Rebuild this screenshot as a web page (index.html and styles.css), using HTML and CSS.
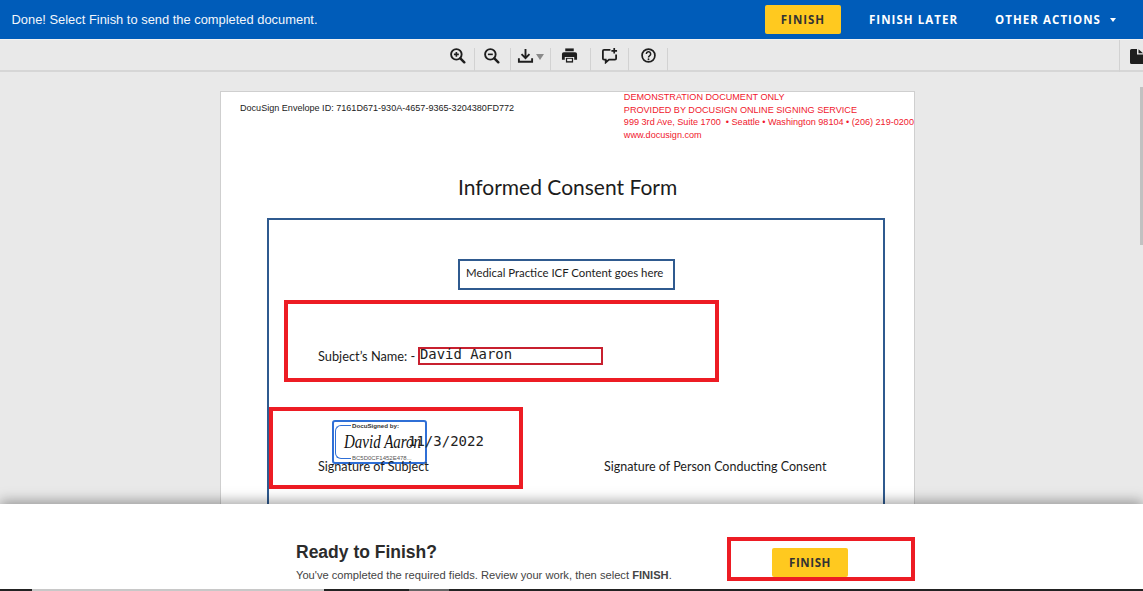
FILE: index.html
```html
<!DOCTYPE html>
<html lang="en">
<head>
<meta charset="utf-8">
<title>Informed Consent Form</title>
<link rel="stylesheet" href="styles.css">
</head>
<body>
<div class="app">
  <header class="topbar">
    <p class="topbar-msg">Done! Select Finish to send the completed document.</p>
    <div class="topbar-actions">
      <button class="btn-finish btn-finish-top">FINISH</button>
      <button class="btn-link btn-later">FINISH LATER</button>
      <button class="btn-link btn-other">OTHER ACTIONS <span class="caret"></span></button>
    </div>
  </header>

  <nav class="toolbar">
    <div class="tool tool-a">
      <svg class="ico" viewBox="0 0 18 18"><circle cx="7.8" cy="7.8" r="5.6" fill="none" stroke="#1e1e1e" stroke-width="2"/><path d="M12 12l4.2 4.2" stroke="#1e1e1e" stroke-width="2.6" stroke-linecap="round"/><path d="M5.2 7.8h5.2M7.8 5.2v5.2" stroke="#1e1e1e" stroke-width="1.7"/></svg>
    </div>
    <div class="tool tool-b">
      <svg class="ico" viewBox="0 0 18 18"><circle cx="7.8" cy="7.8" r="5.6" fill="none" stroke="#1e1e1e" stroke-width="2"/><path d="M12 12l4.2 4.2" stroke="#1e1e1e" stroke-width="2.6" stroke-linecap="round"/><path d="M5.2 7.8h5.2" stroke="#1e1e1e" stroke-width="1.7"/></svg>
    </div>
    <div class="tool tool-c">
      <svg class="ico" viewBox="0 0 18 18"><path d="M9 2v9.5M4.8 7.6L9 11.8l4.2-4.2" fill="none" stroke="#1e1e1e" stroke-width="2"/><path d="M2 12v3.6h14V12" fill="none" stroke="#1e1e1e" stroke-width="2"/></svg>
      <svg class="ico-caret" viewBox="0 0 8 6"><path d="M0 0h8L4 6z" fill="#8a8a8a"/></svg>
    </div>
    <div class="tool tool-c tool-print">
      <svg class="ico" viewBox="0 0 18 18"><path d="M4.5 1.5h9v3h-9z" fill="#1e1e1e"/><path d="M3 5.5h12a2 2 0 0 1 2 2v6h-3v-3H4v3H1v-6a2 2 0 0 1 2-2z" fill="#1e1e1e"/><path d="M5.2 11.5h7.6v5H5.2z" fill="#1e1e1e"/><path d="M6.5 12.5h5v2.500h-5z" fill="#e9e9e9"/></svg>
    </div>
    <div class="tool tool-d">
      <svg class="ico" viewBox="0 0 18 18"><path d="M10 3H3.2A1.2 1.2 0 0 0 2 4.2v8A1.2 1.2 0 0 0 3.2 13.400H5v3l3.500-3h6.300a1.200 1.200 0 0 0 1.200-1.200V8" fill="none" stroke="#1e1e1e" stroke-width="1.900"/><path d="M14 1v6M11 4h6" stroke="#1e1e1e" stroke-width="1.800"/></svg>
    </div>
    <div class="tool tool-e">
      <svg class="ico" viewBox="0 0 18 18"><circle cx="9" cy="9" r="6.800" fill="none" stroke="#1e1e1e" stroke-width="1.800"/><path d="M6.700 7.300a2.300 2.300 0 1 1 3.400 2c-.8.500-1.100.9-1.100 1.700" fill="none" stroke="#1e1e1e" stroke-width="1.600"/><circle cx="9" cy="13" r="1" fill="#1e1e1e"/></svg>
    </div>
    <div class="toolbar-end">
      <svg class="ico-doc" viewBox="0 0 13 15"><path d="M1.500 0H7v5.500h6V15H1.500A1.500 1.500 0 0 1 0 13.500v-12A1.500 1.500 0 0 1 1.500 0z" fill="#1e1e1e"/><path d="M8.500 0.200L13 4.200H8.500z" fill="#1e1e1e"/></svg>
    </div>
  </nav>

  <main class="viewer">
    <article class="page">
      <div class="page-head">
        <p class="envelope">DocuSign Envelope ID: 7161D671-930A-4657-9365-3204380FD772</p>
        <div class="demo">
          <p>DEMONSTRATION DOCUMENT ONLY</p>
          <p>PROVIDED BY DOCUSIGN ONLINE SIGNING SERVICE</p>
          <p>999 3rd Ave, Suite 1700 &nbsp;• Seattle • Washington 98104 • (206) 219-0200</p>
          <p>www.docusign.com</p>
        </div>
      </div>
      <h1 class="doc-title">Informed Consent Form</h1>
      <div class="doc-frame"></div>
      <div class="content-box">Medical Practice ICF Content goes here</div>
      <div class="mark mark-name"></div>
      <span class="doc-label label-name">Subject’s Name: -</span>
      <div class="name-field">David Aaron</div>
      <div class="mark mark-sign"></div>
      <div class="signed">
        <span class="bracket"></span>
        <span class="signed-by">DocuSigned by:</span>
        <span class="scrawl">David Aaron</span>
        <span class="signed-id">BC5D0CF1452E478...</span>
      </div>
      <div class="date-field">11/3/2022</div>
      <span class="doc-label label-sub">Signature of Subject</span>
      <span class="doc-label label-person">Signature of Person Conducting Consent</span>
    </article>
    <div class="scroll-thumb"></div>
    <section class="finish-panel">
      <div class="finish-copy">
        <h2>Ready to Finish?</h2>
        <p>You've completed the required fields. Review your work, then select <b>FINISH</b>.</p>
      </div>
      <div class="finish-mark">
        <button class="btn-finish btn-finish-low">FINISH</button>
      </div>
    </section>
  </main>

  <footer class="strip">
    <span class="seg seg-a"></span><span class="seg seg-b"></span><span class="seg seg-c"></span><span class="seg seg-d"></span><span class="seg seg-e"></span>
  </footer>
</div>
</body>
</html>
```

FILE: styles.css
```css
* { box-sizing: border-box; }
html, body { margin: 0; height: 100%; overflow: hidden; }
p, h1, h2 { margin: 0; }
button { border: 0; background: none; padding: 0; font: inherit; }

.app {
  width: 1143px;
  height: 591px;
  display: flex;
  flex-direction: column;
  font-family: "Liberation Sans", Arial, sans-serif;
  background: #e9e9e9;
  overflow: hidden;
}

/* top bar */
.topbar {
  height: 39px;
  flex: none;
  background: #005cb9;
  display: flex;
  align-items: center;
  justify-content: space-between;
  padding-left: 11.500px;
}
.topbar-msg { color: #f2f6fb; font-size: 12.900px; }
.topbar-actions { display: flex; align-items: center; height: 100%; }
.btn-finish {
  background: #ffc91f;
  color: #333;
  font-family: "Open Sans", sans-serif;
  font-weight: 700;
  font-size: 11.500px;
  letter-spacing: 1px;
  border-radius: 2px;
}
.btn-finish-top { width: 76px; height: 29px; }
.btn-link {
  color: #fff;
  font-family: "Open Sans", sans-serif;
  font-weight: 700;
  font-size: 11.500px;
  letter-spacing: 1.050px;
  white-space: nowrap;
}
.btn-later { margin-left: 28px; }
.btn-other { margin-left: 37px; margin-right: 27px; }
.caret {
  display: inline-block;
  margin-left: 5px;
  vertical-align: 2px;
  border-left: 3.500px solid transparent;
  border-right: 3.500px solid transparent;
  border-top: 4.500px solid #fff;
}

/* toolbar */
.toolbar {
  height: 33px;
  flex: none;
  display: flex;
  align-items: flex-start;
  padding: 8px 0 0 441px;
  background: #e9e9e9;
  border-top: 1px solid #f2f2f2;
  border-bottom: 2px solid #d6d6d6;
  position: relative;
}
.tool {
  height: 23px;
  display: flex;
  align-items: flex-start;
  justify-content: center;
  border-right: 1px solid #d2d2d2;
}
.tool .ico { margin-top: -1px; }
.tool .ico-caret { margin-top: 6px; }
.tool-a { width: 34px; }
.tool-b { width: 36px; padding-right: 2px; }
.tool-c { width: 40px; gap: 2px; }
.tool-print { padding-right: 2px; }
.tool-d { width: 38px; padding-right: 1px; }
.tool-e { width: 39px; }
.ico { width: 17px; height: 17px; display: block; }
.ico-caret { width: 8px; height: 6px; display: block; }
.toolbar-end {
  margin-left: auto;
  margin-top: -8px;
  height: 32px;
  width: 24px;
  border-left: 1px solid #d2d2d2;
  padding: 9px 0 0 10px;
  overflow: hidden;
}
.ico-doc { width: 13px; height: 15px; display: block; }

/* document viewer */
.viewer {
  flex: 1;
  position: relative;
  overflow: hidden;
  padding: 19px 0 0 220px;
  background: #e9e9e9;
}
.page {
  position: relative;
  width: 695px;
  height: 700px;
  background: #fff;
  border: 1px solid #cfcfcf;
  overflow: hidden;
}
.page-head {
  display: flex;
  align-items: flex-start;
  padding: 0 0 0 19px;
  font-size: 9.070px;
  white-space: nowrap;
}
.envelope { margin-top: 11px; width: 384px; color: #222; }
.demo { margin-top: -1px; color: #f0182d; font-size: 9.100px; line-height: 12.500px; }
.doc-title {
  position: absolute;
  left: 237px;
  top: 82px;
  font: 400 21px "Lato", sans-serif;
  color: #1c1c1c;
  white-space: nowrap;
}
.doc-frame {
  position: absolute;
  left: 46px;
  top: 126px;
  width: 618px;
  height: 500px;
  border: 2px solid #2f5a8f;
}
.content-box {
  position: absolute;
  left: 237px;
  top: 167px;
  width: 217px;
  height: 31px;
  border: 2px solid #2f5a8f;
  font: 400 11.400px/24px "Lato", sans-serif;
  color: #1c1c1c;
  padding-left: 6px;
  white-space: nowrap;
}
.mark { position: absolute; border: 4px solid #ed1c24; }
.mark-name { left: 63px; top: 208px; width: 435px; height: 82px; }
.mark-sign { left: 48px; top: 315px; width: 254px; height: 82px; }
.doc-label {
  position: absolute;
  font: 400 12.500px "Lato", sans-serif;
  color: #1c1c1c;
  white-space: nowrap;
}
.label-name { left: 97px; top: 256px; font-size: 12.800px; }
.label-sub { left: 97px; top: 367px; font-size: 12.600px; }
.label-person { left: 383px; top: 367px; }
.name-field {
  position: absolute;
  left: 197px;
  top: 255px;
  width: 185px;
  height: 18px;
  border: 2px solid #c8202f;
  font: 400 13.900px/10px "DejaVu Sans Mono", monospace;
  color: #222;
  white-space: nowrap;
}
.signed {
  position: absolute;
  left: 111px;
  top: 328px;
  width: 95px;
  height: 44px;
  border: 2px solid #2f6fd6;
  border-radius: 3px;
  background: #fff;
}
.bracket {
  position: absolute;
  left: 1px;
  top: 3px;
  width: 19px;
  height: 34px;
  border: 1.500px solid #2f6fd6;
  border-right: 0;
  border-radius: 6px 0 0 6px;
}
.signed-by {
  position: absolute;
  left: 17px;
  top: 0;
  padding: 0 1px;
  background: #fff;
  font-size: 6.200px;
  font-weight: 700;
  color: #333;
  white-space: nowrap;
}
.signed-id {
  position: absolute;
  left: 17px;
  top: 33px;
  padding: 0 1px;
  background: #fff;
  font-size: 6px;
  color: #555;
  white-space: nowrap;
}
.scrawl {
  position: absolute;
  left: 10px;
  top: 12px;
  font: italic 400 15px "Liberation Serif", serif;
  transform: scaleY(1.25);
  color: #111;
  white-space: nowrap;
}
.date-field {
  position: absolute;
  left: 187px;
  top: 341px;
  font: 400 14px "DejaVu Sans Mono", monospace;
  color: #222;
  white-space: nowrap;
}
.scroll-thumb {
  position: absolute;
  right: 0;
  top: 15px;
  width: 3px;
  height: 158px;
  background: #c1c1c1;
}

/* finish panel */
.finish-panel {
  position: absolute;
  left: 0;
  right: 0;
  bottom: 0;
  height: 85px;
  background: #fff;
  box-shadow: 0 -3px 12px rgba(0, 0, 0, .35);
  display: flex;
  padding: 33px 0 0 296px;
}
.finish-copy { width: 431px; color: #333; }
.finish-copy h2 { font-size: 17.500px; line-height: 20px; color: #2b2b2b; margin-top: 5px; }
.finish-copy p { font-size: 11.150px; margin-top: 7px; color: #444; white-space: nowrap; }
.finish-mark {
  width: 188px;
  height: 44px;
  border: 4px solid #ed1c24;
  display: flex;
  justify-content: flex-start;
  padding: 7px 0 0 41px;
}
.btn-finish-low { width: 76px; height: 29px; letter-spacing: .6px; }

/* bottom strip */
.strip { height: 2px; flex: none; display: flex; background: #222; }
.seg { display: block; height: 100%; }
.seg-a { width: 32px; background: #222; }
.seg-b { width: 292px; background: #c8c8c8; }
.seg-c { width: 85px; background: #222; }
.seg-d { width: 40px; background: #666; }
.seg-e { flex: 1; background: #222; }
```
